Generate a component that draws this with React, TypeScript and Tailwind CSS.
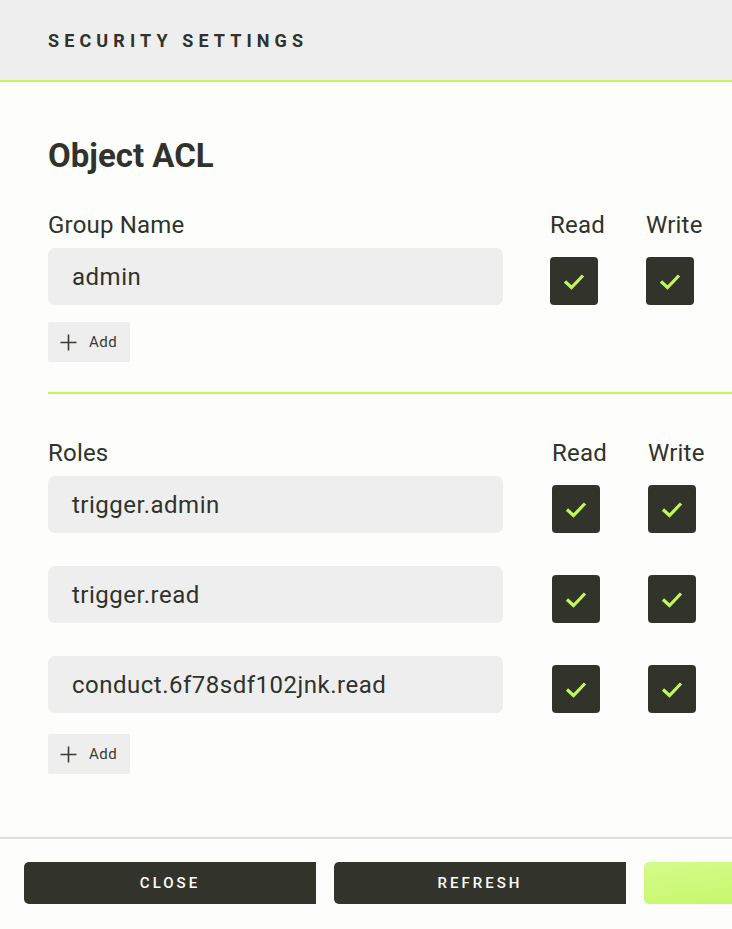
import React from "react"

const ink = "text-[#30322b]"

function Check() {
  return (
    <div className="w-12 h-12 rounded-[4px] bg-[#32342c] flex items-center justify-center shrink-0">
      <svg width="48" height="48" viewBox="0 0 48 48" fill="none">
        <path d="M15 24.5 L21.5 30.5 L33 18.5" stroke="#c2f65e" strokeWidth="3.2" />
      </svg>
    </div>
  )
}

function AddButton({ className }: { className?: string }) {
  return (
    <button className={`flex items-center gap-[12px] h-10 w-[82px] pl-[12px] bg-[#eeeeee] rounded-[2px] ${className ?? ""}`}>
      <svg width="17" height="17" viewBox="0 0 17 17" fill="none">
        <path d="M8.5 0.5 V16.5 M0.5 8.5 H16.5" stroke="#3a3c35" strokeWidth="1.6" />
      </svg>
      <span className="text-[15px] tracking-[0.5px] text-[#3a3c35]">Add</span>
    </button>
  )
}

function Field({ value }: { value: string }) {
  return (
    <div className={`w-[455px] shrink-0 h-[57px] rounded-[7px] bg-[#eeeeee] flex items-center pl-6 pt-[1px] text-[24px] tracking-[0.5px] ${ink}`}>
      {value}
    </div>
  )
}

function Row({ value, shift }: { value: string; shift: string }) {
  return (
    <div className="flex items-end">
      <Field value={value} />
      <div className={`${shift} w-[96px] shrink-0`}><Check /></div>
      <div className="w-[96px] shrink-0"><Check /></div>
    </div>
  )
}

function LabelRow({ label, shift }: { label: string; shift: string }) {
  return (
    <div className={`flex items-center h-[28px] pt-[2px] text-[24px] tracking-[0.2px] ${ink}`}>
      <div className="w-[455px] shrink-0">{label}</div>
      <div className={`${shift} w-[96px] shrink-0`}>Read</div>
      <div className="w-[96px] shrink-0">Write</div>
    </div>
  )
}

const roles = ["trigger.admin", "trigger.read", "conduct.6f78sdf102jnk.read"]

export default function App() {
  return (
    <div className="w-[732px] h-[929px] overflow-hidden bg-[#fdfdfb] flex flex-col" style={{ fontFamily: "Roboto, 'Liberation Sans', sans-serif" }}>
      <div className="h-[82px] shrink-0 bg-[#eeeeee] border-b-2 border-[#c2f65e] flex items-center pl-12">
        <h2 className={`text-[18px] font-bold tracking-[5.1px] ${ink}`}>SECURITY SETTINGS</h2>
      </div>

      <div className="pl-12 flex flex-col">
        <h1 className={`mt-[54px] h-10 leading-10 text-[33px] font-bold ${ink}`}>Object ACL</h1>

        <div className="mt-[34px]">
          <LabelRow label="Group Name" shift="ml-[47px]" />
        </div>
        <div className="mt-[10px]">
          <Row value="admin" shift="ml-[47px]" />
        </div>
        <AddButton className="mt-[17px]" />

        <div className="mt-[30px] h-[2px] w-[700px] bg-[#c2f65e]" />

        <div className="mt-[44px]">
          <LabelRow label="Roles" shift="ml-[49px]" />
        </div>
        <div className="mt-[10px] flex flex-col gap-[33px]">
          {roles.map((r) => <Row key={r} value={r} shift="ml-[49px]" />)}
        </div>
        <AddButton className="mt-[21px]" />
      </div>

      <div className="mt-[63px] h-[2px] bg-[#dedede]" />

      <div className="mt-[23px] flex gap-[18px] pl-6">
        <button className="w-[292px] h-[42px] pt-[1px] shrink-0 rounded-l-[5px] bg-[#32342c] text-white text-[15px] font-medium tracking-[3px]">CLOSE</button>
        <button className="w-[292px] h-[42px] pt-[1px] shrink-0 rounded-l-[5px] bg-[#32342c] text-white text-[15px] font-medium tracking-[3px]">REFRESH</button>
        <button className="w-[292px] h-[42px] shrink-0 rounded-l-[5px] bg-gradient-to-br from-[#d4fb8a] to-[#bff55a]" />
      </div>
    </div>
  )
}
